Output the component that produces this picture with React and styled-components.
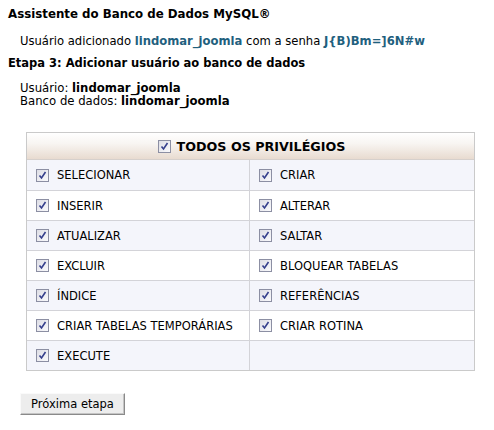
import React from "react";
import styled, { createGlobalStyle } from "styled-components";

const Global = createGlobalStyle`
  html, body { margin: 0; padding: 0; background: #fff; }
  body { font-family: "DejaVu Sans", Verdana, sans-serif; color: #000; }
  * { box-sizing: border-box; }
`;

const Page = styled.div`
  padding: 6px 8px 0 8px;
  width: 478px;
`;

const Title = styled.div`
  font-size: 11.8px;
  font-weight: bold;
  line-height: 16px;
`;

const Line = styled.div`
  font-size: 11.6px;
  line-height: 14px;
  padding-left: 12px;
  margin-top: 12px;
`;

const Link = styled.span`
  color: #1f607e;
  font-weight: bold;
`;

const Step = styled.div`
  font-size: 11.5px;
  font-weight: bold;
  line-height: 16px;
  margin-top: 7px;
`;

const Info = styled.div`
  font-size: 11.7px;
  line-height: 13px;
  padding-left: 12px;
  margin-top: 11px;
`;

const Grid = styled.div`
  margin: 24px 0 0 18px;
  width: 449px;
  border: 1px solid #cacaca;
  display: grid;
  grid-template-columns: 223px 1fr;
`;

const Head = styled.div`
  grid-column: 1 / span 2;
  height: 27px;
  display: flex;
  align-items: center;
  justify-content: center;
  gap: 6px;
  padding-left: 2px;
  font-size: 12.7px;
  font-weight: bold;
  background: linear-gradient(#ffffff 0%, #f8f5f2 40%, #e8dbd0 100%);
  border-bottom: 1px solid #d6d0cc;
`;

const Cell = styled.div`
  height: 30px;
  display: flex;
  align-items: center;
  gap: 8px;
  padding-left: 9px;
  font-size: 11.5px;
  background: ${(p) => (p.$alt ? "#f4f5fb" : "#ffffff")};
  border-top: ${(p) => (p.$first ? "none" : "1px solid #d3d3d8")};
  border-right: ${(p) => (p.$left ? "1px solid #d3d3d8" : "none")};
`;

const Box = styled.svg`
  width: 13px;
  height: 13px;
  flex: none;
`;

const Check = () => (
  <Box viewBox="0 0 13 13">
    <defs>
      <linearGradient id="cbg" x1="0" y1="0" x2="1" y2="1">
        <stop offset="0" stopColor="#dcdce4" />
        <stop offset="1" stopColor="#fbfbfd" />
      </linearGradient>
    </defs>
    <rect x="0.5" y="0.5" width="12" height="12" fill="url(#cbg)" stroke="#8c8fa3" />
    <path d="M3.5 6.5 L5.5 9 L9.5 3" fill="none" stroke="#353f8c" strokeWidth="1.6" />
  </Box>
);

const Button = styled.button`
  margin: 22px 0 0 12px;
  width: 105px;
  height: 22px;
  font-family: "DejaVu Sans", Verdana, sans-serif;
  font-size: 11.5px;
  color: #000;
  background: #ededed;
  border: 1px solid;
  border-color: #fafafa #8a8a8a #8a8a8a #fafafa;
  box-shadow: inset -1px -1px 0 #c4c4c4;
  padding: 0;
`;

const rows = [
  ["SELECIONAR", "CRIAR"],
  ["INSERIR", "ALTERAR"],
  ["ATUALIZAR", "SALTAR"],
  ["EXCLUIR", "BLOQUEAR TABELAS"],
  ["ÍNDICE", "REFERÊNCIAS"],
  ["CRIAR TABELAS TEMPORÁRIAS", "CRIAR ROTINA"],
  ["EXECUTE", null],
];

export default function App() {
  return (
    <>
      <Global />
      <Page>
        <Title>Assistente do Banco de Dados MySQL®</Title>
        <Line>
          Usuário adicionado <Link>lindomar_joomla</Link> com a senha{" "}
          <Link>J{"{"}B)Bm=]6N#w</Link>
        </Line>
        <Step>Etapa 3: Adicionar usuário ao banco de dados</Step>
        <Info>
          Usuário: <b>lindomar_joomla</b>
          <br />
          Banco de dados: <b>lindomar_joomla</b>
        </Info>
        <Grid>
          <Head>
            <Check />
            TODOS OS PRIVILÉGIOS
          </Head>
          {rows.map(([a, b], i) => (
            <React.Fragment key={i}>
              <Cell $alt={i % 2 === 0} $left $first={i === 0}>
                <Check />
                {a}
              </Cell>
              <Cell $alt={i % 2 === 0} $first={i === 0}>
                {b && <Check />}
                {b}
              </Cell>
            </React.Fragment>
          ))}
        </Grid>
        <Button>Próxima etapa</Button>
      </Page>
    </>
  );
}
